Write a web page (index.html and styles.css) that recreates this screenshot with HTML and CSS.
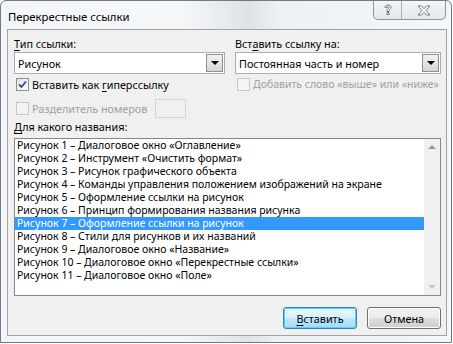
FILE: index.html
```html
<!DOCTYPE html>
<html>
<head>
<meta charset="utf-8">
<link rel="stylesheet" href="styles.css">
</head>
<body>
<div class="window">
  <div class="titlebar">
    <div class="title">Перекрестные ссылки</div>
    <div class="caption-btns">
      <div class="cbtn help">
        <svg width="10" height="12" viewBox="0 0 10 12"><path d="M2 3.5 C2 1.5 3.5 1 5 1 C6.8 1 8 2 8 3.4 C8 5 6 5.3 6 6.8 L6 7.5 L4 7.5 L4 6.6 C4 4.8 6 4.6 6 3.5 C6 2.9 5.6 2.6 5 2.6 C4.3 2.6 4 3 4 3.6 Z M4 8.5 L6 8.5 L6 10.5 L4 10.5 Z" fill="#fff" stroke="#5f6b78" stroke-width="0.9"/></svg>
      </div>
      <div class="cbtn close">
        <svg width="14" height="11" viewBox="0 0 14 11"><path d="M1 1 L4.5 1 L7 3.6 L9.5 1 L13 1 L9 5.5 L13 10 L9.5 10 L7 7.4 L4.5 10 L1 10 L5 5.5 Z" fill="#fff" stroke="#5f6b78" stroke-width="0.9"/></svg>
      </div>
    </div>
  </div>
  <div class="client">
    <div class="top-grid">
      <div class="col">
        <div class="label"><u>Т</u>ип ссылки:</div>
        <div class="combo"><span class="combo-text">Рисунок</span><span class="drop"><span class="tri"></span></span></div>
        <div class="check-row"><span class="cb checked"><svg width="9" height="9" viewBox="0 0 9 9"><path d="M1 4.5 L3.5 7 L8 1.5" fill="none" stroke="#2d4e8e" stroke-width="1.8"/></svg></span><span>Вставить как <u>г</u>иперссылку</span></div>
        <div class="check-row disabled second"><span class="cb dis"></span><span class="sep-text">Разделитель номеров</span><span class="numbox"></span></div>
      </div>
      <div class="col">
        <div class="label">Вст<u>а</u>вить ссылку на:</div>
        <div class="combo"><span class="combo-text">Постоянная часть и номер</span><span class="drop"><span class="tri"></span></span></div>
        <div class="check-row disabled"><span class="cb dis"></span><span class="add-text">Добавить слово «выше» или «ниже»</span></div>
      </div>
    </div>
    <div class="label list-label"><u>Д</u>ля какого названия:</div>
    <div class="listbox">
      <div class="items">
        <div class="item">Рисунок 1 – Диалоговое окно «Оглавление»</div>
        <div class="item">Рисунок 2 – Инструмент «Очистить формат»</div>
        <div class="item">Рисунок 3 – Рисунок графического объекта</div>
        <div class="item">Рисунок 4 – Команды управления положением изображений на экране</div>
        <div class="item">Рисунок 5 – Оформление ссылки на рисунок</div>
        <div class="item">Рисунок 6 – Принцип формирования названия рисунка</div>
        <div class="item selected">Рисунок 7 – Оформление ссылки на рисунок</div>
        <div class="item">Рисунок 8 – Стили для рисунков и их названий</div>
        <div class="item">Рисунок 9 – Диалоговое окно «Название»</div>
        <div class="item">Рисунок 10 – Диалоговое окно «Перекрестные ссылки»</div>
        <div class="item">Рисунок 11 – Диалоговое окно «Поле»</div>
      </div>
      <div class="scrollbar">
        <span class="arrow up"></span>
        <span class="arrow down"></span>
      </div>
    </div>
    <div class="buttons">
      <div class="btn default"><u>В</u>ставить</div>
      <div class="btn">Отмена</div>
    </div>
  </div>
</div>
</body>
</html>
```
FILE: styles.css
```css
* { box-sizing: border-box; }
html, body { margin: 0; padding: 0; background: #ffffff; }
body {
  font-family: "Noto Sans", "DejaVu Sans", sans-serif;
  font-size: 10.8px;
  color: #000;
  width: 453px;
  height: 344px;
  overflow: hidden;
}
u { text-decoration: underline; text-underline-offset: 2px; }

.window {
  width: 452px;
  height: 343px;
  border: 1px solid #6f7b87;
  border-radius: 6px 6px 0 0;
  background: linear-gradient(90deg, #f3f5f8 0%, #f6f7f9 40%, #dfe3e8 55%, #eef1f4 62%, #f4f6f8 100%);
  padding: 0 4px 6px 6px;
  display: flex;
  flex-direction: column;
}

.titlebar {
  height: 28px;
  flex: none;
  display: flex;
  align-items: flex-start;
  justify-content: space-between;
}
.title {
  padding: 8px 0 0 1px;
  font-size: 11.3px;
  color: #000;
}
.caption-btns {
  display: flex;
  margin-right: 1px;
  border: 1px solid #8c96a2;
  border-top: none;
  border-radius: 0 0 5px 5px;
  height: 19px;
  background: linear-gradient(#f4f6f8, #e4e8ec);
  overflow: hidden;
}
.cbtn {
  display: flex;
  align-items: center;
  justify-content: center;
  height: 100%;
}
.cbtn.help { width: 28px; border-right: 1px solid #a6aeb7; }
.cbtn.close { width: 43px; }

.client {
  flex: 1;
  border: 1px solid #a0a4a8;
  background: #f0f0f0;
  padding: 7px 5px 0 6px;
  display: flex;
  flex-direction: column;
}

.top-grid {
  display: grid;
  grid-template-columns: 211px 206px;
  column-gap: 10px;
}
.col { display: flex; flex-direction: column; }
.label { height: 14px; line-height: 14px; white-space: nowrap; }

.combo {
  margin-top: 1px;
  height: 22px;
  background: #fff;
  border: 1px solid #abadb3;
  display: flex;
  align-items: center;
  justify-content: space-between;
  padding: 0 1px 0 3px;
}
.drop {
  width: 17px;
  height: 18px;
  border: 1px solid #8e8f8f;
  background: linear-gradient(#f2f2f2, #d5d5d5);
  display: flex;
  align-items: center;
  justify-content: center;
}
.tri {
  width: 0; height: 0;
  border-left: 4px solid transparent;
  border-right: 4px solid transparent;
  border-top: 4px solid #000;
}

.check-row {
  display: flex;
  align-items: center;
  height: 20px;
  gap: 3px;
  padding-left: 2px;
  white-space: nowrap;
}
.check-row.second { margin-top: 4px; }
.check-row.disabled { color: #a0a0a0; }
.cb {
  flex: none;
  width: 13px; height: 13px;
  border: 1px solid #8e8f8f;
  background: linear-gradient(135deg, #e0e0e0, #ffffff);
  display: flex; align-items: center; justify-content: center;
}
.cb.dis { border-color: #c8c8c8; background: #f4f4f4; }
.sep-text { flex: 0 0 120px; }
.add-text { font-size: 10.5px; }
.numbox {
  width: 31px; height: 19px;
  border: 1px solid #d4d4d4;
  background: #f0f0f0;
}

.list-label { margin-top: 2px; }

.listbox {
  margin-top: 4px;
  height: 158px;
  width: 427px;
  border: 1px solid #828790;
  background: #fff;
  display: flex;
}
.items { flex: 1; }
.item {
  height: 13px;
  line-height: 13px;
  padding-left: 2px;
  white-space: nowrap;
  font-size: 10.5px;
}
.item.selected { background: #3399ff; color: #fff; }

.scrollbar {
  width: 16px;
  background: #f0f0f0;
  display: flex;
  flex-direction: column;
  justify-content: space-between;
  align-items: center;
  padding: 6px 0 6px;
}
.arrow {
  width: 0; height: 0;
  border-left: 4px solid transparent;
  border-right: 4px solid transparent;
}
.arrow.up { border-bottom: 4px solid #9a9a9a; }
.arrow.down { border-top: 4px solid #c6c6c6; }

.buttons {
  display: flex;
  justify-content: flex-end;
  gap: 10px;
  margin-top: 11px;
}
.btn {
  width: 74px;
  height: 22px;
  border: 1px solid #707070;
  border-radius: 3px;
  background: linear-gradient(#f2f2f2 0%, #ebebeb 50%, #dddddd 51%, #cfcfcf 100%);
  display: flex;
  align-items: center;
  justify-content: center;
  box-shadow: inset 0 0 0 1px #fcfcfc;
}
.btn.default {
  border-color: #3c7fb1;
  box-shadow: inset 0 0 0 1px #48d8fb;
  background: linear-gradient(#eaf6fd 0%, #d9f0fc 50%, #bee6fd 51%, #a7d9f5 100%);
}
```
